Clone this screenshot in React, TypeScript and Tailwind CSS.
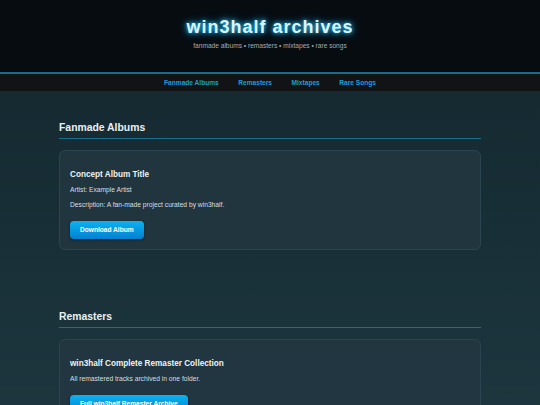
const sections = [
  {
    title: 'Fanmade Albums',
    cards: [
      {
        name: 'Concept Album Title',
        lines: ['Artist: Example Artist', 'Description: A fan-made project curated by win3half.'],
        button: 'Download Album',
      },
    ],
  },
  {
    title: 'Remasters',
    cards: [
      {
        name: 'win3half Complete Remaster Collection',
        lines: ['All remastered tracks archived in one folder.'],
        button: 'Full win3half Remaster Archive',
      },
    ],
  },
];

const navLinks = ['Fanmade Albums', 'Remasters', 'Mixtapes', 'Rare Songs'];

export default function App() {
  return (
    <div
      className="min-h-screen bg-gradient-to-b from-[#13262d] to-[#1f3a43] text-[#e6eef2]"
      style={{ fontFamily: '"Liberation Sans", Arial, sans-serif' }}
    >
      <header className="bg-[#070c11] h-[72px] flex flex-col items-center pt-[16px]">
        <h1 className="text-[18px] leading-[22px] font-bold tracking-[1px] text-[#d8f6ff] [text-shadow:0_0_4px_#2fc4ff,0_0_8px_#1a9fd6]">
          win3half archives
        </h1>
        <p className="mt-[4px] text-[6.6px] leading-[8px] text-[#a3abb0]">
          fanmade albums • remasters • mixtapes • rare songs
        </p>
      </header>
      <nav className="border-t-2 border-[#1b6a88] bg-[#121314] h-[19px] flex items-center justify-center gap-[19.5px]">
        {navLinks.map((l) => (
          <a key={l} className="text-[6.6px] font-bold text-[#1a9fd8] pt-[1px]">
            {l}
          </a>
        ))}
      </nav>

      <main className="w-[422px] mx-auto pt-[30px] pb-8">
        {sections.map((s) => (
          <section key={s.title} className="mb-[60px]">
            <h2 className="text-[10.4px] leading-[14px] font-bold text-[#e9f0f3] pb-[3px] border-b border-[#1b6f8e]">
              {s.title}
            </h2>
            {s.cards.map((c) => (
              <div
                key={c.name}
                className="mt-[11px] bg-[#223640]/90 border border-[#2b4550] rounded-[6px] px-[10px] pt-[18px] pb-[10px]"
              >
                <h3 className="text-[8.2px] leading-[11px] font-bold text-[#eef3f5]">{c.name}</h3>
                <div className="mt-[4px] flex flex-col gap-[4px]">
                  {c.lines.map((t) => (
                    <p key={t} className="text-[6.7px] leading-[11px] text-[#d7dee2]">
                      {t}
                    </p>
                  ))}
                </div>
                <button className="mt-[11px] h-[18px] px-[10px] rounded-[4px] bg-gradient-to-b from-[#0cb2f2] to-[#0680d0] text-[6.6px] font-bold text-white shadow-[0_1px_3px_rgba(0,0,0,0.4)]">
                  {c.button}
                </button>
              </div>
            ))}
          </section>
        ))}
      </main>
    </div>
  );
}
